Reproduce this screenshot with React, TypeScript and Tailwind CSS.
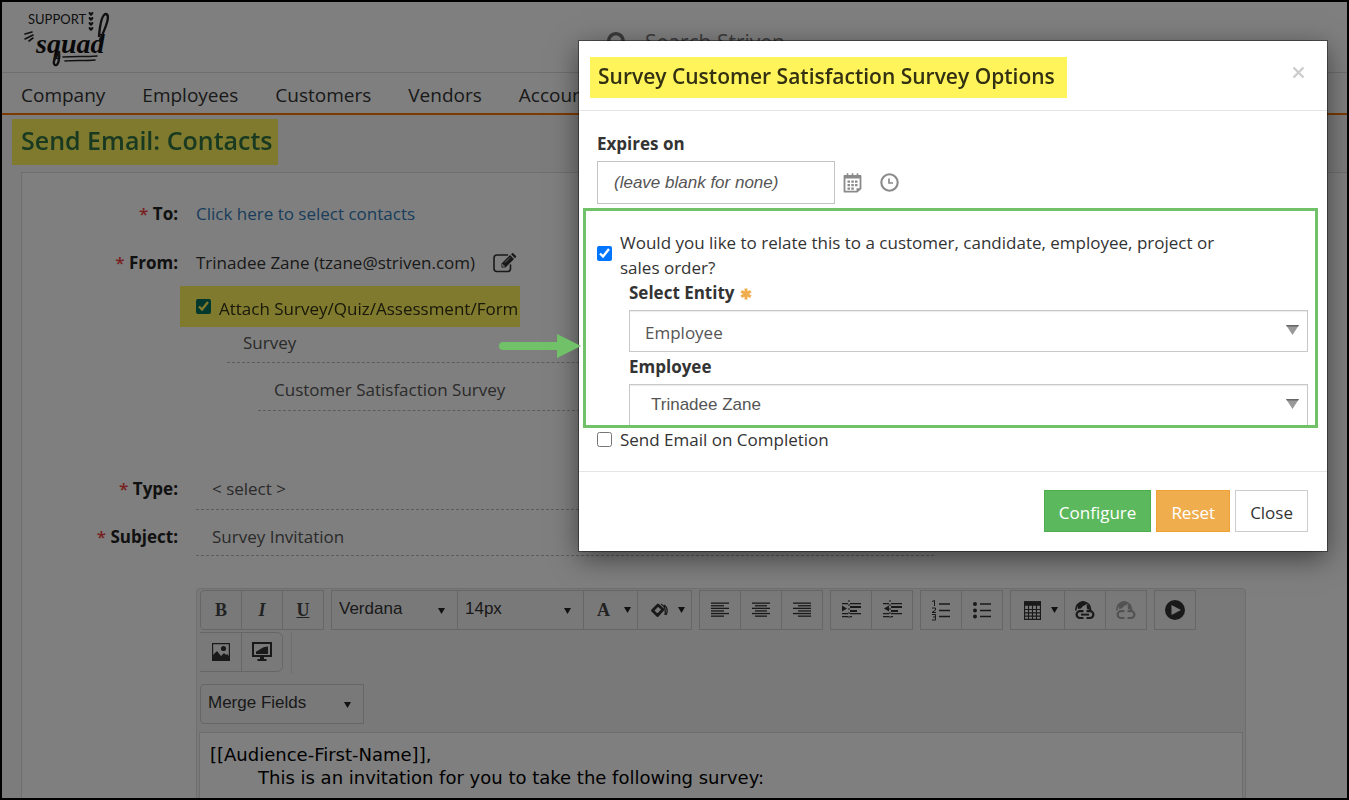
import { useState, type ReactNode } from 'react'
import clsx from 'clsx'
import { FaSearch } from 'react-icons/fa'

const NAV_ITEMS = ['Company', 'Employees', 'Customers', 'Vendors', 'Accounting']

// Marker-pen highlight, laid over the content so that it tints it
const HIGHLIGHT =
  "relative isolate after:pointer-events-none after:absolute after:inset-0 after:bg-[#fff45a] after:mix-blend-multiply after:content-['']"

function Logo() {
  return (
    <svg width="88" height="58" viewBox="0 0 88 58" role="img" aria-label="Support Squad">
      <text x="5" y="14" fontSize="13" fill="#222" fontFamily="Lato, sans-serif" fontWeight="400">
        SUPPORT
      </text>
      <text x="13" y="43" fontSize="28" fill="#111" fontFamily="'Liberation Serif', serif" fontStyle="italic" fontWeight="700">
        squad
      </text>
      <g fill="#222">
        {[2, 7, 12, 17].map((y) => (
          <path key={y} d={`M68 ${y + 4}c-3-2-3-4-1-4l1 1 1-1c2 0 2 2-1 4z`} />
        ))}
      </g>
      <g fill="none" stroke="#222" strokeWidth="1.6" strokeLinecap="round">
        <path d="M77 30C82 19 88 5 83 4C79 4 77 15 76 26" strokeWidth="2.4" />
        <path d="M2 24l7-2M2 29l8-4M6 31l4-3" />
        <path d="M40 47c12-1 22 0 34-1M42 51c10-1 20 0 30-1" />
        <path d="M36 42c1 8-1 14-4 13c-3-2 0-8 4-12" strokeWidth="2.4" />
      </g>
    </svg>
  )
}

function EditIcon() {
  return (
    <svg width="24" height="20" viewBox="0 0 24 20" aria-hidden="true">
      <path
        d="M14.500 2H4a3 3 0 00-3 3v10.500a3 3 0 003 3h10.500a3 3 0 003-3V12"
        fill="none"
        stroke="currentColor"
        strokeWidth="1.600"
        strokeLinecap="round"
      />
      <path d="M8.500 10.500L17 2l4 4-8.500 8.500h-4zM18 1.200l.8-.8a1.200 1.200 0 011.700 0l2.300 2.300a1.200 1.200 0 010 1.700l-.8.800z" fill="currentColor" />
      <path d="M9.800 11.200v2h2" fill="none" stroke="#fff" strokeWidth="1" />
      <path d="M12 9.500L17 4.500" stroke="#fff" strokeWidth=".7" />
    </svg>
  )
}

function Caret() {
  return (
    <svg width="7" height="6" viewBox="0 0 7 6" className="shrink-0" aria-hidden="true">
      <path d="M0 0h7L3.500 6z" fill="#222" />
    </svg>
  )
}

function ToolGroup({ children }: { children: ReactNode }) {
  return <div className="flex pl-px">{children}</div>
}

interface ToolButtonProps {
  label: string
  wide?: boolean
  className?: string
  children: ReactNode
}

function ToolButton({ label, wide = false, className, children }: ToolButtonProps) {
  return (
    <button
      type="button"
      aria-label={label}
      className={clsx(
        '-ml-px flex h-10 items-center border border-[#cdcdcd] text-[#444]',
        wide ? 'w-[55px] justify-between pr-[6px] pl-[13px]' : 'w-[42px] justify-center',
        className,
      )}
    >
      {children}
      {wide && <Caret />}
    </button>
  )
}

interface ToolSelectProps {
  label: string
  value: string
  className?: string
}

function ToolSelect({ label, value, className }: ToolSelectProps) {
  return (
    <div className={clsx('relative -ml-px h-10 border border-[#cdcdcd]', className)}>
      <select
        aria-label={label}
        className="h-9 w-full appearance-none bg-transparent pr-6 pl-[7px] font-['Liberation_Sans',sans-serif] text-[17px] text-[#333]"
      >
        <option>{value}</option>
      </select>
      <span className="pointer-events-none absolute right-3 bottom-[15px]">
        <Caret />
      </span>
    </div>
  )
}

function Lines({ rows }: { rows: [number, number][] }) {
  return (
    <svg width="18" height="16" viewBox="0 0 18 16" aria-hidden="true">
      {rows.map(([x, w], i) => (
        <rect key={i} x={x} y={i * 2.6 + 0.5} width={w} height="1.3" fill="#333" />
      ))}
    </svg>
  )
}

function IndentIcon({ outdent = false }: { outdent?: boolean }) {
  return (
    <svg width="19" height="20" viewBox="0 0 19 20" fill="#333" aria-hidden="true">
      <path d="M0 3h6v1.200H0zM8 3h11v1.200H8zM8 6h11v2H8zM8 10h7v2H8zM8 13h11v1.200H8zM0 13h6v1.200H0zM0 16h6v1.200H0zM8 16h2v1.200H8z" />
      <path d="M7 0v20" stroke="#333" strokeWidth="1" strokeDasharray="2 2" />
      <path d={outdent ? 'M6 5.500v6L1 8.500z' : 'M0 5.500v6l5-3z'} />
    </svg>
  )
}

function ListIcon({ ordered = false }: { ordered?: boolean }) {
  return (
    <svg width="18" height="21" viewBox="0 0 18 21" fill="none" stroke="#333" strokeWidth="1.300" aria-hidden="true">
      <path d="M7 4h11M7 10.500h11M7 16.500h11" />
      {ordered ? (
        <path d="M0 1.500L2.500 .5V6M0 8h3.500v2L0 12.500h4M0 14.500h3.500v5.500H0M1 17h2.500" strokeWidth="1" />
      ) : (
        <g fill="#333" stroke="none">
          <circle cx="2" cy="4" r="2" />
          <circle cx="2" cy="10.500" r="2" />
          <circle cx="2" cy="16.500" r="2" />
        </g>
      )}
    </svg>
  )
}

function LinkIcon({ broken = false }: { broken?: boolean }) {
  return (
    <svg width="20" height="20" viewBox="0 0 20 20" aria-hidden="true" className={clsx(broken && 'opacity-40')}>
      <path d="M1 10.500a7.300 7.300 0 1114.400 0" fill="none" stroke="#333" strokeWidth="1.600" />
      <path d="M2 5L5 2l3-1 4 1.500-1.500 2.500-2.500 1-2 2.500-3 .5zM11.500 4l3 2 .5 4-3-1z" fill="#333" />
      <path
        d="M8.500 18H5a3.400 3.400 0 010-6.800h3.500M11.500 18H15a3.400 3.400 0 000-6.800h-3.500"
        fill="none"
        stroke="#333"
        strokeWidth="2.200"
      />
      {!broken && <path d="M6 14.600h8" stroke="#333" strokeWidth="2" />}
    </svg>
  )
}

function EditorToolbar() {
  return (
    <div className="px-[3px] pt-px">
      <div className="flex flex-wrap gap-x-[7px] gap-y-[2px]">
        <ToolGroup>
          <ToolButton label="Bold" className="rounded-l">
            <span className="font-['Liberation_Serif',serif] text-lg font-bold">B</span>
          </ToolButton>
          <ToolButton label="Italic">
            <span className="font-['Liberation_Serif',serif] text-lg font-bold italic">I</span>
          </ToolButton>
          <ToolButton label="Underline">
            <span className="font-['Liberation_Serif',serif] text-lg font-bold underline">U</span>
          </ToolButton>
        </ToolGroup>
        <ToolGroup>
          <ToolSelect label="Font family" value="Verdana" className="w-[127px]" />
          <ToolSelect label="Font size" value="14px" className="w-[127px]" />
          <ToolButton label="Text color" wide>
            <span className="font-['Liberation_Serif',serif] text-lg font-bold">A</span>
          </ToolButton>
          <ToolButton label="Background color" wide>
            <svg width="18" height="14" viewBox="0 0 18 14" aria-hidden="true">
              <path d="M7 2l5 4.500-5.500 6L1.500 7.500z" fill="none" stroke="#333" strokeWidth="2.800" strokeLinejoin="round" />
              <path d="M10 1c4 2 5 5 4 11M13 2c4 3 4 6 2 10" fill="none" stroke="#333" strokeWidth="1.300" />
            </svg>
          </ToolButton>
        </ToolGroup>
        <ToolGroup>
          <ToolButton label="Align left">
            <Lines rows={[[0, 18], [0, 13], [0, 18], [0, 13], [0, 18], [0, 13]]} />
          </ToolButton>
          <ToolButton label="Align center">
            <Lines rows={[[0, 18], [3, 12], [0, 18], [3, 12], [0, 18], [3, 12]]} />
          </ToolButton>
          <ToolButton label="Align right">
            <Lines rows={[[0, 18], [5, 13], [0, 18], [5, 13], [0, 18], [5, 13]]} />
          </ToolButton>
        </ToolGroup>
        <ToolGroup>
          <ToolButton label="Indent">
            <IndentIcon />
          </ToolButton>
          <ToolButton label="Outdent">
            <IndentIcon outdent />
          </ToolButton>
        </ToolGroup>
        <ToolGroup>
          <ToolButton label="Numbered list">
            <ListIcon ordered />
          </ToolButton>
          <ToolButton label="Bulleted list">
            <ListIcon />
          </ToolButton>
        </ToolGroup>
        <ToolGroup>
          <ToolButton label="Insert table" wide>
            <svg width="17" height="19" viewBox="0 0 18 20" aria-hidden="true">
              <path d="M0 0h18v5H0z" fill="#333" />
              <path d="M.6 4v15.400h16.800V4M4.800 4v15M9 4v15M13.200 4v15M0 9h18M0 12.500h18M0 16h18" fill="none" stroke="#333" strokeWidth="1.200" />
            </svg>
          </ToolButton>
          <ToolButton label="Insert link">
            <LinkIcon />
          </ToolButton>
          <ToolButton label="Remove link">
            <LinkIcon broken />
          </ToolButton>
        </ToolGroup>
        <ToolGroup>
          <ToolButton label="Insert video">
            <svg width="20" height="20" viewBox="0 0 20 20" aria-hidden="true">
              <circle cx="10" cy="10" r="10" fill="#333" />
              <path d="M6.500 5v10l9.500-5z" fill="#f3f3f3" />
            </svg>
          </ToolButton>
        </ToolGroup>
      </div>
      <div className="mt-[2px] flex">
        <ToolGroup>
          <ToolButton label="Insert image" className="border-l-0">
            <svg width="18" height="18" viewBox="0 0 18 18" aria-hidden="true">
              <path d="M.6.6h16.800v16.800H.6z" fill="none" stroke="#333" strokeWidth="1.200" />
              <circle cx="11.500" cy="5.500" r="2.600" fill="#333" />
              <path d="M1 17v-5l4-4 4 5 3-3 2 2 1-1 2 2v4z" fill="#333" />
            </svg>
          </ToolButton>
          <ToolButton label="Media" className="rounded-r-md">
            <svg width="20" height="20" viewBox="0 0 20 20" aria-hidden="true">
              <path d="M1 1h18v13H1z" fill="none" stroke="#333" strokeWidth="2" />
              <path d="M4 12V9.500C8 8 9 5 16 4.500V12zM8 14h4v3h2.500v2h-9v-2H8z" fill="#333" />
            </svg>
          </ToolButton>
        </ToolGroup>
        <span className="ml-2 h-[42px] border-l border-[#ddd]" />
      </div>
      <div className="mt-[10px] flex pl-px">
        <ToolSelect label="Merge fields" value="Merge Fields" className="w-[164px] rounded-l" />
      </div>
    </div>
  )
}

interface FieldLabelProps {
  htmlFor?: string
  children: ReactNode
}

function FieldLabel({ htmlFor, children }: FieldLabelProps) {
  return (
    <label htmlFor={htmlFor} className="w-[156px] shrink-0 text-right font-bold text-[#222]">
      <span className="font-semibold text-[#f04040]">*</span> {children}
    </label>
  )
}

function EmailPage() {
  const [subject, setSubject] = useState('Survey Invitation')
  const underlined = 'appearance-none border-b border-dashed border-[#bbb] bg-transparent px-4 text-[#555]'

  return (
    <>
      <header className="flex h-[71px] border-b border-[#dcdcdc] bg-white">
        <a href="#home" className="ml-[21px] pt-2">
          <Logo />
        </a>
        <label className="ml-[496px] flex items-center gap-4 pt-3 text-[#777]">
          <FaSearch size={22} aria-hidden="true" />
          <input aria-label="Search" placeholder="Search Striven" className="text-[21px] placeholder:text-[#777]" />
        </label>
      </header>
      <nav className="flex h-[42px] items-center gap-[37px] border-b-2 border-[#fb7500] bg-white px-[19px] pt-1 text-[19px] text-[#333]">
        {NAV_ITEMS.map((item) => (
          <a key={item} href={`#${item.toLowerCase()}`}>
            {item}
          </a>
        ))}
      </nav>
      <main className="pt-1">
        <h1 className={clsx(HIGHLIGHT, 'ml-[10px] inline-block h-[46px] pr-[5px] pl-[9px] text-[25px] leading-[42px] font-semibold text-[#337ab7]')}>
          Send Email: Contacts
        </h1>
        <section className="mt-[7px] ml-[19px] border-t border-l border-[#dedede] bg-white pt-[18px] pb-10">
          <div className="mb-[3px] flex h-[46px] items-center gap-[18px]">
            <FieldLabel>To:</FieldLabel>
            <a href="#contacts" className="text-[#337ab7]">
              Click here to select contacts
            </a>
          </div>
          <div className="flex h-[46px] items-center gap-[18px]">
            <FieldLabel>From:</FieldLabel>
            <span className="text-[#333]">Trinadee Zane (tzane@striven.com)</span>
            <button type="button" aria-label="Edit sender" className="text-[#333]">
              <EditIcon />
            </button>
          </div>
          <div className="pl-[158px]">
            <label className={clsx(HIGHLIGHT, 'inline-flex h-[41px] items-center gap-2 pr-[2px] pl-4 text-[#333]')}>
              <input type="checkbox" defaultChecked className="size-[15px] accent-[#0075ff]" />
              <span className="pt-1">Attach Survey/Quiz/Assessment/Form</span>
            </label>
            <div className="pl-[47px]">
              <select aria-label="Attachment type" className={clsx(underlined, 'block h-9 w-[707px] pb-1')}>
                <option>Survey</option>
              </select>
            </div>
            <div className="mt-[6px] pl-[78px]">
              <select aria-label="Survey" className={clsx(underlined, 'block h-[42px] w-[676px]')}>
                <option>Customer Satisfaction Survey</option>
              </select>
            </div>
          </div>
          <div className="mt-[57px] flex h-[42px] items-center gap-[18px]">
            <FieldLabel htmlFor="type">Type:</FieldLabel>
            <select id="type" className={clsx(underlined, 'h-[42px] w-[738px]')}>
              <option>&lt; select &gt;</option>
            </select>
          </div>
          <div className="mt-2 flex h-[38px] items-center gap-[18px]">
            <FieldLabel htmlFor="subject">Subject:</FieldLabel>
            <input
              id="subject"
              value={subject}
              onChange={(e) => setSubject(e.target.value)}
              className={clsx(underlined, 'h-[38px] w-[738px]')}
            />
          </div>
          <div className="mt-8 ml-[174px] max-w-[1050px] rounded-t border border-[#dedede] bg-[#f3f3f3]">
            <EditorToolbar />
            <div className="mx-[2px] mt-2 min-h-40 border border-[#dadada] bg-white px-[10px] py-[10px] font-['DejaVu_Sans',sans-serif] text-lg leading-[23px] text-black">
              <p>[[Audience-First-Name]],</p>
              <p className="pl-12">This is an invitation for you to take the following survey:</p>
            </div>
          </div>
        </section>
      </main>
    </>
  )
}

interface EntitySelectProps {
  id: string
  value: string
  className?: string
}

function EntitySelect({ id, value, className }: EntitySelectProps) {
  return (
    <div className="relative mt-[5px]">
      <select
        id={id}
        className={clsx('block w-full appearance-none border border-[#c8c8c8] text-[#555] shadow-[inset_0_1px_1px_rgba(0,0,0,0.08)]', className)}
      >
        <option>{value}</option>
      </select>
      <svg width="13" height="10" viewBox="0 0 13 10" className="pointer-events-none absolute top-[15px] right-[9px]" aria-hidden="true">
        <path d="M0 0h13L6.500 10z" fill="#999" />
        <path d="M0 0h13l-1 1.600H1z" fill="#666" />
      </svg>
    </div>
  )
}

function SurveyOptionsDialog() {
  const [relate, setRelate] = useState(true)
  const [sendEmail, setSendEmail] = useState(false)
  const button = 'h-[42px] border px-[14px] pt-1 text-[17px]'

  return (
    <div
      role="dialog"
      aria-labelledby="dialog-title"
      className="relative w-[748px] bg-white text-[#333] shadow-[0_0_0_1px_rgba(0,0,0,0.4),0_7px_26px_rgba(0,0,0,0.5)]"
    >
      <div className="flex h-[70px] items-start justify-between border-b border-[#e5e5e5] pt-4 pr-[21px] pl-[11px]">
        <h2 id="dialog-title" className={clsx(HIGHLIGHT, 'h-[41px] pr-3 pl-2 text-[21px] leading-[38px] font-semibold')}>
          Survey Customer Satisfaction Survey Options
        </h2>
        <button type="button" aria-label="Dismiss" className="pt-2 text-[#ccc]">
          <svg width="15" height="15" viewBox="0 0 15 15" aria-hidden="true">
            <path d="M2.500 2.500l10 10M12.500 2.500l-10 10" stroke="currentColor" strokeWidth="2.400" />
          </svg>
        </button>
      </div>
      <div className="pt-5 pb-5">
        <div className="mb-1 pl-[18px]">
          <label htmlFor="expires" className="mb-[5px] block leading-[25px] font-bold">
            Expires on
          </label>
          <div className="flex items-center">
            <input
              id="expires"
              placeholder="(leave blank for none)"
              className="h-[43px] w-[238px] border border-[#c4c4c4] px-4 font-['Liberation_Sans',sans-serif] italic placeholder:text-[#555]"
            />
            <button type="button" aria-label="Pick a date" className="ml-2">
              <svg width="19" height="20" viewBox="0 0 19 20" aria-hidden="true">
                <path d="M1.500 3h16v12.500L14 18.700H1.500z" fill="none" stroke="#8a8a8a" strokeWidth="1.800" strokeLinejoin="round" />
                <path d="M1 2h17v3.500H1zM13.500 19v-3.800H18z" fill="#8a8a8a" />
                <path d="M4.500 .3v3M9.500 .3v3M14.500 .3v3" stroke="#8a8a8a" strokeWidth="1.600" />
                <path d="M4.500 7.500h2.500v2.200H4.500zM8.300 7.500h2.500v2.200H8.300zM12 7.500h2.500v2.200H12zM4.500 11h2.500v2.200H4.500zM8.300 11h2.500v2.200H8.300zM12 11h2.500v2.200H12zM4.500 14.500h2.500v2.200H4.500zM8.300 14.500h2.500v2.200H8.300z" fill="#8a8a8a" />
              </svg>
            </button>
            <button type="button" aria-label="Pick a time" className="ml-[18px]">
              <svg width="19" height="19" viewBox="0 0 19 19" fill="none" stroke="#8a8a8a" aria-hidden="true">
                <circle cx="9.500" cy="9.500" r="8.200" strokeWidth="2.100" />
                <path d="M9 5.500v4.500h4" strokeWidth="1.700" />
              </svg>
            </button>
          </div>
        </div>
        <section className="mr-[9px] ml-1 border-[3px] border-[#70c168] pt-[19px]">
          <label className="flex items-start gap-2 pl-[11px]">
            <input
              type="checkbox"
              checked={relate}
              onChange={(e) => setRelate(e.target.checked)}
              className="mt-4 size-[15px] shrink-0 accent-[#0075ff]"
            />
            <span className="max-w-[600px] leading-[25px]">
              Would you like to relate this to a customer, candidate, employee, project or sales order?
            </span>
          </label>
          <div className="pr-[7px] pl-[43px]">
            <label htmlFor="entity" className="flex items-center gap-[5px] leading-[25px] font-bold">
              Select Entity
              <svg width="12" height="12" viewBox="0 0 12 12" className="mt-[3px]" aria-hidden="true">
                <path d="M6 .5v11M1.200 3.200l9.600 5.600M10.800 3.200L1.200 8.800" stroke="#f0ad4e" strokeWidth="3" />
              </svg>
            </label>
            <EntitySelect id="entity" value="Employee" className="h-[42px] px-[15px] pt-1" />
            <label htmlFor="employee" className="mt-[2px] block leading-[25px] font-bold">
              Employee
            </label>
            <EntitySelect
              id="employee"
              value="Trinadee Zane"
              className="h-[41px] border-b-0 px-[21px] font-['Liberation_Sans',sans-serif]"
            />
          </div>
        </section>
        <label className="flex items-center gap-2 pl-[18px] leading-[23px]">
          <input
            type="checkbox"
            checked={sendEmail}
            onChange={(e) => setSendEmail(e.target.checked)}
            className="size-[15px]"
          />
          Send Email on Completion
        </label>
      </div>
      <div className="flex justify-end gap-[5px] border-t border-[#e5e5e5] pt-[18px] pr-[19px] pb-[19px]">
        <button type="button" className={clsx(button, 'border-[#4cae4c] bg-[#5cb85c] text-white')}>
          Configure
        </button>
        <button type="button" className={clsx(button, 'border-[#eea236] bg-[#f0ad4e] text-white')}>
          Reset
        </button>
        <button type="button" className={clsx(button, 'border-[#ccc] bg-white')}>
          Close
        </button>
      </div>
      <svg
        width="82"
        height="24"
        viewBox="0 0 82 24"
        className="pointer-events-none absolute top-[293px] -left-20"
        aria-hidden="true"
      >
        <path d="M4 12h58" stroke="#70c168" strokeWidth="8" strokeLinecap="round" />
        <path d="M58 0l24 12-24 12z" fill="#70c168" />
      </svg>
    </div>
  )
}

export default function App() {
  return (
    <div className="relative h-screen overflow-hidden border-2 border-black bg-[#f9f9f9] font-['Open_Sans',sans-serif] text-[17px]">
      <EmailPage />
      <div className="absolute inset-0 flex items-start justify-end bg-black/50 pt-[39px] pr-5">
        <SurveyOptionsDialog />
      </div>
    </div>
  )
}
